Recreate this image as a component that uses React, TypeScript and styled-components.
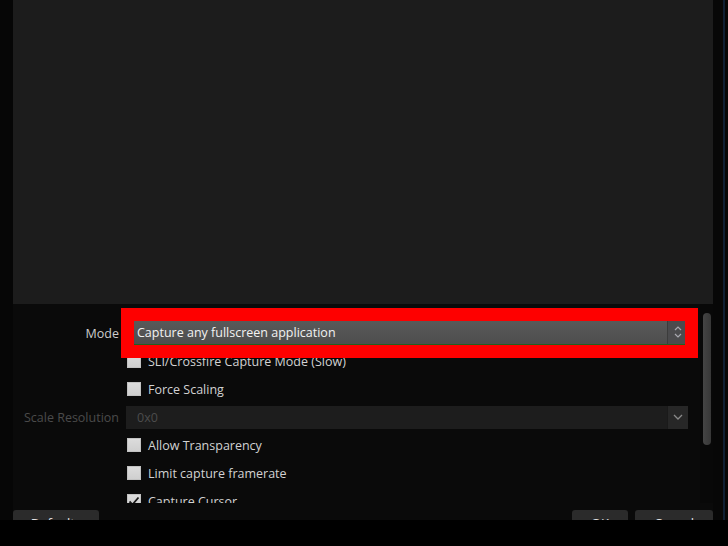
import * as React from 'react';
import styled, { createGlobalStyle } from 'styled-components';

const GlobalStyle = createGlobalStyle`
  html, body {
    margin: 0;
    padding: 0;
    background: #000;
  }
  body {
    font-family: "Open Sans", "Noto Sans", "Liberation Sans", sans-serif;
    font-size: 12.5px;
    -webkit-font-smoothing: antialiased;
  }
`;

const Screen = styled.div`
  width: 728px;
  height: 546px;
  background: #000;
  overflow: hidden;
`;
const Window = styled.div`
  display: flex;
  height: 520px;
  overflow: hidden;
  background: #060606;
`;
const Main = styled.div`
  display: flex;
  flex-direction: column;
  width: 700px;
  margin-left: 13px;
  background: #0a0a0a;
`;
const EdgeStrip = styled.div`
  flex: 1;
  display: flex;
  justify-content: flex-end;
  padding-right: 3px;
  background: #070707;
`;
const EdgeLine = styled.div`
  width: 2px;
  background: #0f1f33;
`;
const Preview = styled.div`
  height: 304px;
  flex-shrink: 0;
  background: #1c1c1c;
`;
const Settings = styled.div`
  display: flex;
  height: 199px;
  flex-shrink: 0;
  overflow: hidden;
`;
const Form = styled.div`
  flex: 1;
  display: grid;
  grid-template-columns: 106px 1fr;
  grid-auto-rows: 28px;
  column-gap: 7px;
  padding: 15px 12px 0 0;
  align-items: center;
`;
const Label = styled.div<{ $dim?: boolean }>`
  text-align: right;
  color: ${p => (p.$dim ? '#4b4b4b' : '#cdcdcd')};
  white-space: nowrap;
`;
const Field = styled.div`
  position: relative;
  display: flex;
  align-items: center;
  height: 100%;
`;
const Combo = styled.div<{ $active?: boolean }>`
  display: flex;
  align-items: stretch;
  width: 100%;
  height: ${p => (p.$active ? 26 : 23)}px;
  box-sizing: border-box;
  background: ${p =>
    p.$active ? 'linear-gradient(#5a5a5a, #4e4e4e)' : '#1d1d1d'};
  border-bottom: ${p => (p.$active ? '2px solid #22601f' : 'none')};
  color: ${p => (p.$active ? '#f2f2f2' : '#4c4c4c')};
`;
const ComboText = styled.div`
  flex: 1;
  display: flex;
  align-items: center;
  padding-left: 11px;
  white-space: nowrap;
`;
const ComboArrow = styled.div<{ $active?: boolean }>`
  width: 20px;
  display: flex;
  align-items: center;
  justify-content: center;
  background: ${p => (p.$active ? '#4b4b4d' : '#272727')};
  border-left: 1px solid ${p => (p.$active ? '#3c3c3c' : '#1a1a1a')};
  color: ${p => (p.$active ? '#a9a9b0' : '#8a8a8a')};
`;
const Highlight = styled.div`
  position: absolute;
  left: -5px;
  right: -10px;
  top: 50%;
  height: 50px;
  margin-top: -25px;
  border: 13px solid #fe0000;
  box-sizing: border-box;
  pointer-events: none;
`;
const CheckRow = styled.label`
  display: flex;
  align-items: center;
  gap: 7px;
  padding-left: 1px;
  color: #d2d2d2;
  white-space: nowrap;
`;
const Box = styled.span`
  display: flex;
  align-items: center;
  justify-content: center;
  width: 14px;
  height: 14px;
  box-sizing: border-box;
  background: linear-gradient(#dcdcdc, #cfcfcf);
  border: 1px solid #c2c2c2;
`;
const ScrollTrack = styled.div`
  width: 13px;
  flex-shrink: 0;
  background: #080808;
  padding: 9px 2px 0 3px;
  box-sizing: border-box;
`;
const ScrollThumb = styled.div`
  width: 8px;
  height: 132px;
  border-radius: 4px;
  background: linear-gradient(90deg, #444, #373737);
`;
const ButtonBar = styled.div`
  display: flex;
  gap: 7px;
  padding-top: 7px;
`;
const Button = styled.div<{ $w: number }>`
  width: ${p => p.$w}px;
  height: 26px;
  display: flex;
  align-items: center;
  justify-content: center;
  border-radius: 3px;
  background: #2b2b2b;
  color: #e2e2e2;
  font-size: 13px;
  flex-shrink: 0;
`;
const Spacer = styled.div`
  flex: 1;
`;

function UpDown() {
  return (
    <svg width="8" height="14" viewBox="0 0 8 14" fill="none" stroke="currentColor" strokeWidth="1.2">
      <polyline points="1,5 4,2 7,5" />
      <polyline points="1,9 4,12 7,9" />
    </svg>
  );
}

function Down() {
  return (
    <svg width="10" height="6" viewBox="0 0 10 6" fill="none" stroke="currentColor" strokeWidth="1.3">
      <polyline points="1,1 5,5 9,1" />
    </svg>
  );
}

function Check(props: { label: string; checked?: boolean }) {
  return (
    <CheckRow>
      <Box>
        {props.checked && (
          <svg width="12" height="12" viewBox="0 0 12 12" fill="none" stroke="#1a1a1a" strokeWidth="1.8">
            <polyline points="1.5,6.5 4.5,9.5 10.5,2.5" />
          </svg>
        )}
      </Box>
      {props.label}
    </CheckRow>
  );
}

export default function App() {
  const checks: Array<{ label: string; checked?: boolean }> = [
    { label: 'Allow Transparency' },
    { label: 'Limit capture framerate' },
    { label: 'Capture Cursor', checked: true },
  ];

  return (
    <Screen>
      <GlobalStyle />
      <Window>
        <Main>
          <Preview />
          <Settings>
            <Form>
              <Label>Mode</Label>
              <Field>
                <Combo $active>
                  <ComboText>Capture any fullscreen application</ComboText>
                  <ComboArrow $active>
                    <UpDown />
                  </ComboArrow>
                </Combo>
                <Highlight />
              </Field>

              <div />
              <Check label="SLI/Crossfire Capture Mode (Slow)" />

              <div />
              <Check label="Force Scaling" />

              <Label $dim>Scale Resolution</Label>
              <Field>
                <Combo>
                  <ComboText>0x0</ComboText>
                  <ComboArrow>
                    <Down />
                  </ComboArrow>
                </Combo>
              </Field>

              {checks.map(c => (
                <React.Fragment key={c.label}>
                  <div />
                  <Check label={c.label} checked={c.checked} />
                </React.Fragment>
              ))}
            </Form>
            <ScrollTrack>
              <ScrollThumb />
            </ScrollTrack>
          </Settings>
          <ButtonBar>
            <Button $w={86}>Defaults</Button>
            <Spacer />
            <Button $w={56}>OK</Button>
            <Button $w={78}>Cancel</Button>
          </ButtonBar>
        </Main>
        <EdgeStrip>
          <EdgeLine />
        </EdgeStrip>
      </Window>
    </Screen>
  );
}
